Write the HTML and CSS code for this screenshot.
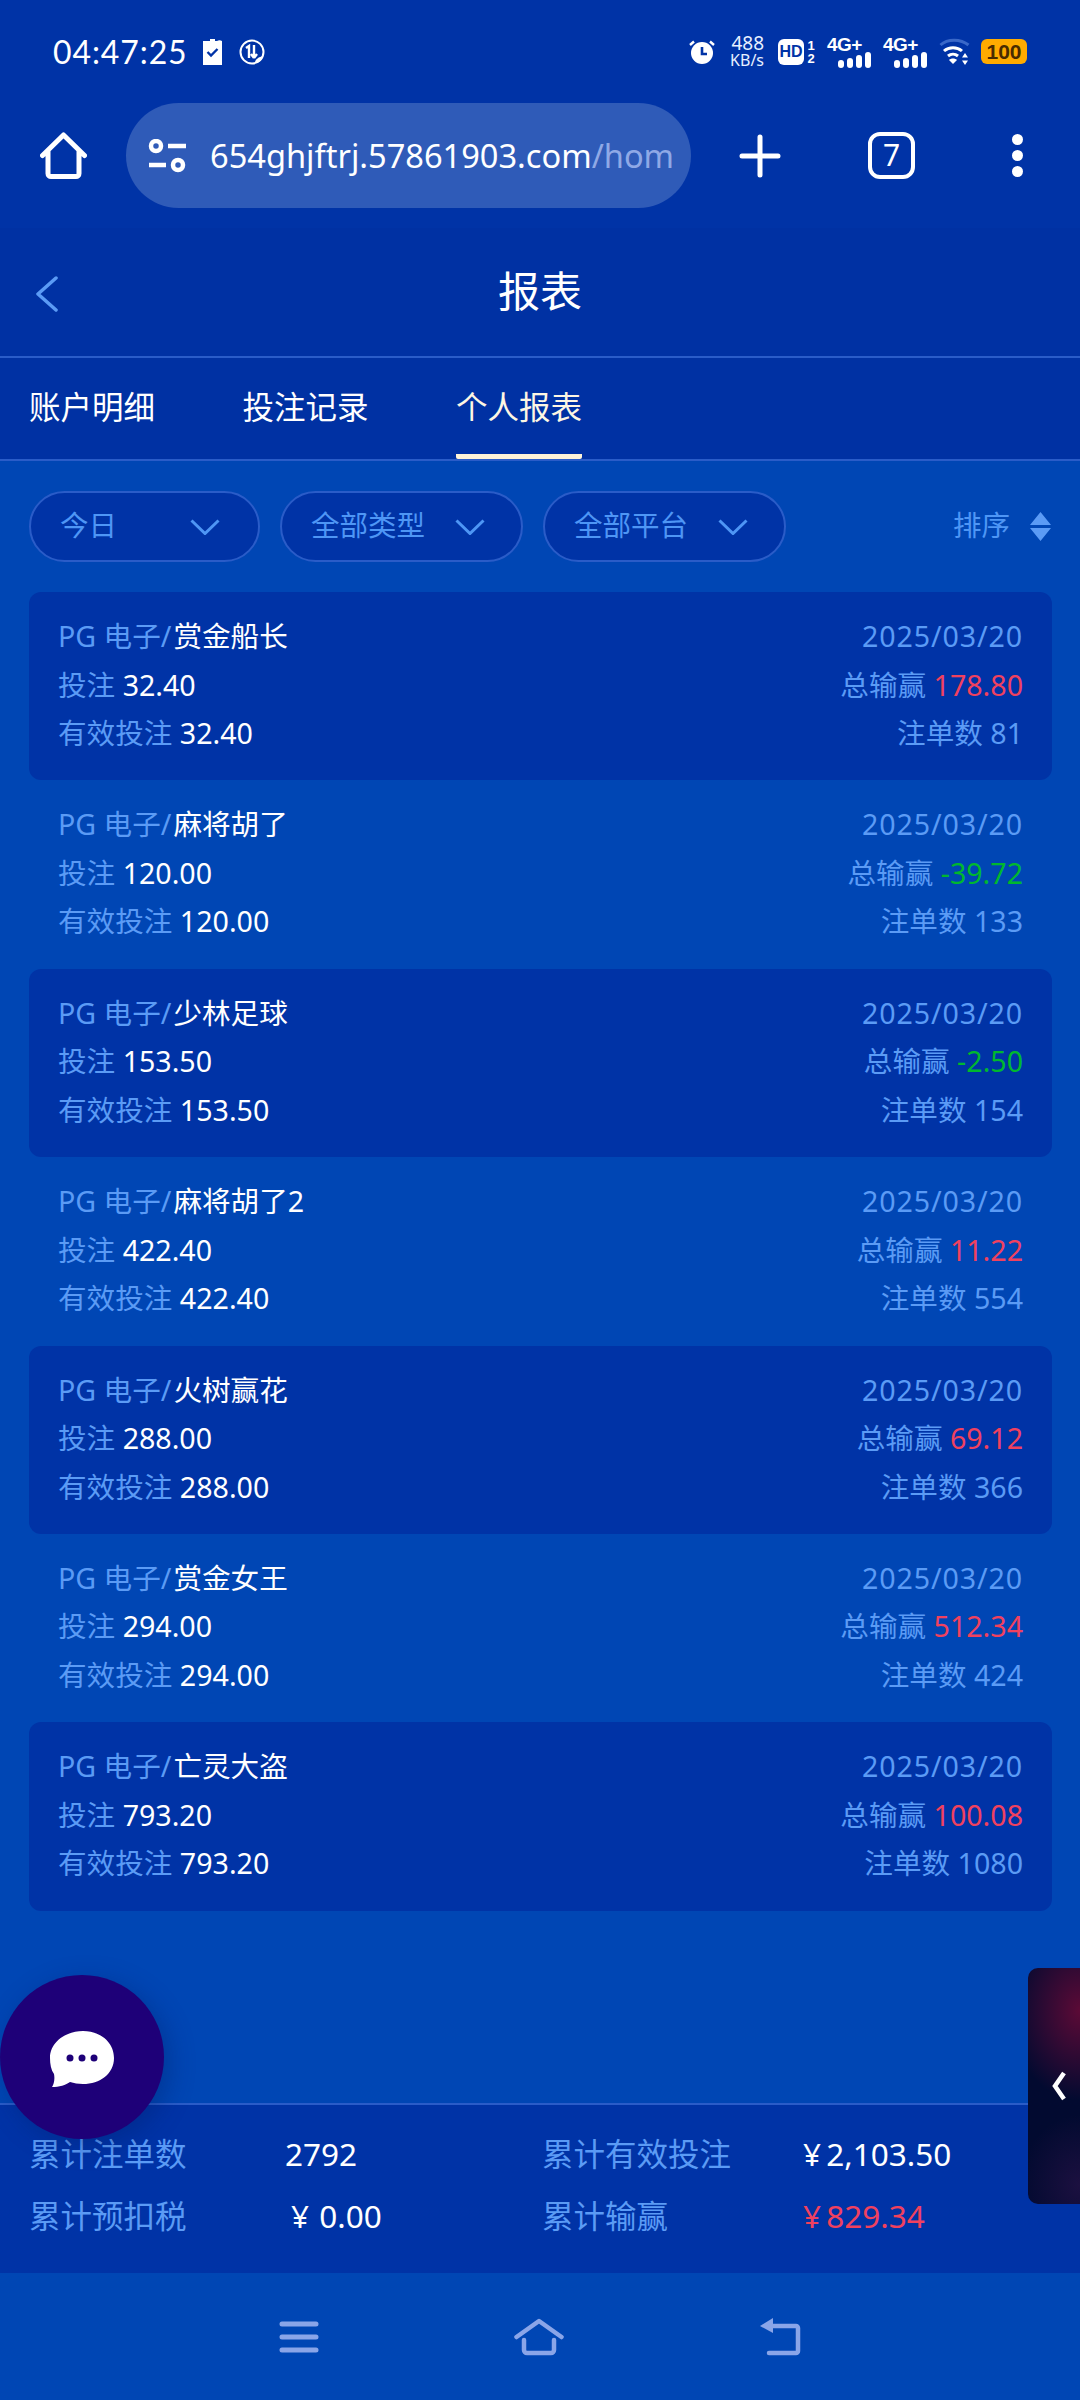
FILE: index.html
```html
<!DOCTYPE html>
<html lang="zh">
<head>
<meta charset="utf-8">
<title>报表</title>
<link rel="stylesheet" href="styles.css">
</head>
<body>
<div class="page">
  <header class="top">
    <div class="status">
      <span class="time">04:47:25</span>
      <svg class="st-batt" viewBox="0 0 19 26"><path fill="#fff" d="M5 2h2V0h5v2h2a5 5 0 0 1 5 0v24H0V2z"/><path fill="none" stroke="#0033a6" stroke-width="2.4" d="M4.500 13l3.500 3.500 6.500-6.500"/></svg>
      <svg class="st-circ" viewBox="0 0 26 26"><circle cx="13" cy="13" r="11.500" fill="none" stroke="#fff" stroke-width="2"/><path fill="none" stroke="#fff" stroke-width="2.400" d="M7 9l3-2v12M15 6v12M15 19l-3-4M15 19l3-4"/><path fill="#fff" d="M16 24c0-4 4-6 8-7-1 4-3 7-8 7z"/></svg>
      <span class="st-spacer"></span>
      <svg class="st-alarm" viewBox="0 0 26 26"><circle cx="13" cy="14" r="11" fill="#fff"/><path fill="none" stroke="#fff" stroke-width="2.400" d="M1 6l4-3.500M25 6l-4-3.500"/><path fill="none" stroke="#0033a6" stroke-width="2.600" d="M13 8v7h5"/></svg>
      <span class="st-speed"><span class="st-num">488</span><span class="st-unit">KB/s</span></span>
      <span class="st-hd">HD</span>
      <span class="st-sim"><span>1</span><span>2</span></span>
      <span class="st-net"><span class="st-g">4G+</span><span class="bars"><i class="b1"></i><i class="b2"></i><i class="b3"></i><i class="b4"></i></span></span>
      <span class="st-net"><span class="st-g">4G+</span><span class="bars"><i class="b1"></i><i class="b2"></i><i class="b3"></i><i class="b4"></i></span></span>
      <svg class="st-wifi" viewBox="0 0 32 27"><path fill="none" stroke="#3a68c8" stroke-width="3" d="M1.500 7c7-6.500 20-6.500 28 0"/><path fill="none" stroke="#fff" stroke-width="3" d="M5 13c5-4.500 13-4.500 18 0M9 18c3-2.500 7-2.500 10 0"/><path fill="#fff" d="M14 26l-4-4c2-2 6-2 8 0zM26 15l3 4.500h-6zM26 27l-3-4.500h6z"/></svg>
      <span class="st-battery">100</span>
    </div>
    <div class="toolbar">
      <svg class="tb-home" viewBox="0 0 47 47"><path fill="none" stroke="#fff" stroke-width="5" stroke-linecap="round" stroke-linejoin="round" d="M2.500 23.500 23.500 3l21 20.500M8 19v22.500a3 3 0 0 0 3 3h25a3 3 0 0 0 3-3V19"/></svg>
      <div class="url">
        <svg class="url-ico" viewBox="0 0 39 34"><g fill="none" stroke="#fff" stroke-width="4.500"><circle cx="8" cy="7" r="5"/><circle cx="30" cy="26" r="5"/></g><path stroke="#fff" stroke-width="4.500" d="M20 7h18M1 26h17"/></svg>
        <span class="url-text">654ghjftrj.57861903.com<span class="url-path">/hom</span></span>
      </div>
      <svg class="tb-plus" viewBox="0 0 42 44"><path stroke="#fff" stroke-width="5" stroke-linecap="round" d="M3 22h36M21 3v38"/></svg>
      <span class="tb-tabs">7</span>
      <span class="tb-menu"><i></i><i></i><i></i></span>
    </div>
    <div class="title-bar">
      <svg class="back" viewBox="0 0 24 36"><path fill="none" stroke="#5b9bf5" stroke-width="3.500" stroke-linecap="round" stroke-linejoin="round" d="M21 2 3 18l18 16"/></svg>
      <h1 class="title">报表</h1>
    </div>
    <nav class="tabs">
      <a class="tab">账户明细</a>
      <a class="tab">投注记录</a>
      <a class="tab tab-on">个人报表</a>
    </nav>
  </header>

  <main class="main">
    <div class="filters">
      <div class="pill pill-a"><span class="pill-text">今日</span><svg class="chev" viewBox="0 0 30 16"><path fill="none" stroke="#4e96f5" stroke-width="3" d="M1.500 1.500 15 14.500 28.500 1.500"/></svg></div>
      <div class="pill pill-b"><span class="pill-text">全部类型</span><svg class="chev" viewBox="0 0 30 16"><path fill="none" stroke="#4e96f5" stroke-width="3" d="M1.500 1.500 15 14.500 28.500 1.500"/></svg></div>
      <div class="pill pill-b"><span class="pill-text">全部平台</span><svg class="chev" viewBox="0 0 30 16"><path fill="none" stroke="#4e96f5" stroke-width="3" d="M1.500 1.500 15 14.500 28.500 1.500"/></svg></div>
      <div class="sort"><span class="pill-text">排序</span><svg class="sort-ico" viewBox="0 0 21 29"><path fill="#5b9bf5" d="M10.500 0 21 13H0zM10.500 29 0 16h21z"/></svg></div>
    </div>

    <section class="list">
      <article class="card card-dark">
        <div class="col"><p><span class="lbl">PG 电子/</span><span class="val name">赏金船长</span></p><p><span class="lbl">投注 </span><span class="val">32.40</span></p><p><span class="lbl">有效投注 </span><span class="val">32.40</span></p></div>
        <div class="col col-r"><p class="lbl date">2025/03/20</p><p><span class="lbl">总输赢 </span><span class="win">178.80</span></p><p class="lbl">注单数 81</p></div>
      </article>
      <article class="card">
        <div class="col"><p><span class="lbl">PG 电子/</span><span class="val name">麻将胡了</span></p><p><span class="lbl">投注 </span><span class="val">120.00</span></p><p><span class="lbl">有效投注 </span><span class="val">120.00</span></p></div>
        <div class="col col-r"><p class="lbl date">2025/03/20</p><p><span class="lbl">总输赢 </span><span class="loss">-39.72</span></p><p class="lbl">注单数 133</p></div>
      </article>
      <article class="card card-dark">
        <div class="col"><p><span class="lbl">PG 电子/</span><span class="val name">少林足球</span></p><p><span class="lbl">投注 </span><span class="val">153.50</span></p><p><span class="lbl">有效投注 </span><span class="val">153.50</span></p></div>
        <div class="col col-r"><p class="lbl date">2025/03/20</p><p><span class="lbl">总输赢 </span><span class="loss">-2.50</span></p><p class="lbl">注单数 154</p></div>
      </article>
      <article class="card">
        <div class="col"><p><span class="lbl">PG 电子/</span><span class="val name">麻将胡了2</span></p><p><span class="lbl">投注 </span><span class="val">422.40</span></p><p><span class="lbl">有效投注 </span><span class="val">422.40</span></p></div>
        <div class="col col-r"><p class="lbl date">2025/03/20</p><p><span class="lbl">总输赢 </span><span class="win">11.22</span></p><p class="lbl">注单数 554</p></div>
      </article>
      <article class="card card-dark">
        <div class="col"><p><span class="lbl">PG 电子/</span><span class="val name">火树赢花</span></p><p><span class="lbl">投注 </span><span class="val">288.00</span></p><p><span class="lbl">有效投注 </span><span class="val">288.00</span></p></div>
        <div class="col col-r"><p class="lbl date">2025/03/20</p><p><span class="lbl">总输赢 </span><span class="win">69.12</span></p><p class="lbl">注单数 366</p></div>
      </article>
      <article class="card">
        <div class="col"><p><span class="lbl">PG 电子/</span><span class="val name">赏金女王</span></p><p><span class="lbl">投注 </span><span class="val">294.00</span></p><p><span class="lbl">有效投注 </span><span class="val">294.00</span></p></div>
        <div class="col col-r"><p class="lbl date">2025/03/20</p><p><span class="lbl">总输赢 </span><span class="win">512.34</span></p><p class="lbl">注单数 424</p></div>
      </article>
      <article class="card card-dark">
        <div class="col"><p><span class="lbl">PG 电子/</span><span class="val name">亡灵大盗</span></p><p><span class="lbl">投注 </span><span class="val">793.20</span></p><p><span class="lbl">有效投注 </span><span class="val">793.20</span></p></div>
        <div class="col col-r"><p class="lbl date">2025/03/20</p><p><span class="lbl">总输赢 </span><span class="win">100.08</span></p><p class="lbl">注单数 1080</p></div>
      </article>
    </section>
  </main>

  <footer class="summary">
    <span class="lbl">累计注单数</span><span class="val sum-a">2792</span>
    <span class="lbl">累计有效投注</span><span class="val">¥ 2,103.50</span>
    <span class="lbl">累计预扣税</span><span class="val sum-b">¥ 0.00</span>
    <span class="lbl">累计输赢</span><span class="win">¥ 829.34</span>
  </footer>

  <nav class="sysnav">
    <svg class="sys-menu" viewBox="0 0 40 32"><path stroke="#8aa5e8" stroke-width="5" stroke-linecap="round" d="M3 3h34M3 16h34M3 29h34"/></svg>
    <svg class="sys-home" viewBox="0 0 50 38"><path fill="none" stroke="#8aa5e8" stroke-width="4.500" stroke-linecap="round" stroke-linejoin="round" d="M2.500 19 25 3l22.500 16M10 22v10a3 3 0 0 0 3 3h24a3 3 0 0 0 3-3V22"/></svg>
    <svg class="sys-back" viewBox="0 0 42 38"><path fill="none" stroke="#8aa5e8" stroke-width="4.500" stroke-linecap="round" stroke-linejoin="round" d="M9 8h28a2 2 0 0 1 2 2v23a2 2 0 0 1-2 2H10"/><path fill="#8aa5e8" d="M14 0v15L1 8z"/></svg>
  </nav>

  <button class="chat" aria-label="chat">
    <svg viewBox="0 0 64 56"><path fill="#fff" d="M33 0c17 0 31 11 31 27S50 53 33 53c-5 0-9-1-13-2-4 3-11 5-18 5 2-3 3-8 2-13C1 39 0 33 0 27 0 11 16 0 33 0z"/><circle cx="20" cy="27" r="3.500" fill="#1e0078"/><circle cx="32" cy="27" r="3.500" fill="#1e0078"/><circle cx="44" cy="27" r="3.500" fill="#1e0078"/></svg>
  </button>
  <div class="side"><svg viewBox="0 0 14 30"><path fill="none" stroke="#fff" stroke-width="4.500" d="M12 2 3 15l9 13"/></svg></div>
</div>
</body>
</html>
```
FILE: styles.css
```css
* { box-sizing: border-box; }
html, body { margin: 0; padding: 0; }
body {
  width: 1080px;
  height: 2400px;
  overflow: hidden;
  font-family: "Noto Sans", "Noto Sans CJK SC", sans-serif;
  color: #fff;
  background: #0046b4;
}
p, h1 { margin: 0; font-weight: 400; }
.page { position: relative; display: flex; flex-direction: column; height: 2400px; }

/* top */
.top { background: #0033a6; }
.status { display: flex; align-items: center; height: 103px; padding: 0 53px 0 53px; }
.time { font-size: 32px; line-height: 1; width: 150px; font-family: "Lato", "Noto Sans", sans-serif; letter-spacing: .9px; }
.st-batt { width: 19px; height: 26px; }
.st-circ { width: 26px; height: 26px; margin-left: 17px; }
.st-spacer { flex: 1; }
.st-alarm { width: 26px; height: 26px; }
.st-speed { display: flex; flex-direction: column; align-items: flex-end; width: 36px; margin-left: 13px; color: #e8f0ff; }
.st-num { font-size: 19px; line-height: 17px; }
.st-unit { font-size: 16px; line-height: 16px; }
.st-hd { width: 26px; height: 26px; margin-left: 14px; border-radius: 6px; background: #fff; color: #0033a6; font: 700 16px/26px "Liberation Sans", sans-serif; text-align: center; }
.st-sim { display: flex; flex-direction: column; width: 10px; margin-left: 2px; font: 700 13px/13px "Liberation Sans", sans-serif; text-align: center; }
.st-net { display: flex; flex-direction: column; align-items: flex-end; width: 44px; height: 32px; margin-left: 11px; }
.st-net + .st-net { margin-left: 12px; }
.st-g { align-self: flex-start; font: 700 19px/18px "Liberation Sans", sans-serif; letter-spacing: -.6px; }
.bars { display: flex; align-items: flex-end; gap: 3px; height: 16px; margin-top: -2px; }
.bars i { display: block; width: 6px; border-radius: 3px; background: #fff; }
.b1 { height: 8px; }
.b2 { height: 10px; }
.b3 { height: 13px; }
.b4 { height: 16px; }
.st-wifi { width: 32px; height: 27px; margin-left: 12px; }
.st-battery { width: 46px; height: 25px; margin-left: 10px; border-radius: 6px; background: #ffab00; color: #4a2b00; font: 700 21px/25px "Liberation Sans", sans-serif; text-align: center; }

.toolbar { display: flex; align-items: center; height: 125px; padding: 0 0 20px 40px; }
.tb-home { width: 47px; height: 47px; }
.url { display: flex; align-items: center; width: 565px; height: 105px; margin-left: 39px; padding: 0 20px 0 22px; border-radius: 53px; background: #2f5bb8; }
.url-ico { flex: none; width: 39px; height: 34px; }
.url-text { flex: 1; margin-left: 23px; white-space: nowrap; font-size: 32.600px; line-height: 46px; }
.url-path { color: #8fa9e6; }
.tb-plus { width: 42px; height: 44px; margin-left: 48px; }
.tb-tabs { width: 47px; height: 47px; margin-left: 87px; border: 4px solid #fff; border-radius: 12px; font-size: 30px; line-height: 38px; text-align: center; }
.tb-menu { display: flex; flex-direction: column; gap: 5px; margin-left: 97px; }
.tb-menu i { display: block; width: 11px; height: 11px; border-radius: 50%; background: #fff; }

.title-bar { position: relative; display: flex; align-items: center; justify-content: center; height: 130px; border-bottom: 2px solid #2a5cc8; background: #0031a3; }
.back { position: absolute; left: 35px; top: 48px; width: 24px; height: 36px; }
.title { font-size: 42px; line-height: 56px; margin-top: -2px; }

.tabs { display: flex; gap: 87.500px; height: 103px; padding-left: 29px; border-bottom: 2px solid #2a5cc8; background: #0031a3; }
.tab { display: block; height: 101px; padding-top: 27px; font-size: 31.500px; line-height: 44px; }
.tab-on { color: #fdf6e3; border-bottom: 5px solid #fdf3d8; border-radius: 0 0 2px 2px; }

/* main */
.main { flex: 1; display: flex; flex-direction: column; padding: 0 28px 0 29px; }
.filters { display: flex; align-items: center; gap: 20px; height: 131px; flex: none; padding-right: 1px; }
.pill { display: flex; align-items: center; justify-content: space-between; height: 71px; border: 2px solid #2a5cc8; border-radius: 36px; background: #0033a6; color: #4e96f5; font-size: 28.500px; line-height: 40px; }
.pill-a { width: 231px; padding: 0 38px 0 29px; }
.pill-b { width: 243px; padding: 0 36px 0 29px; }
.pill-text { margin-top: -3px; }
.chev { width: 30px; height: 16px; }
.sort { display: flex; align-items: center; gap: 20px; margin-left: auto; color: #4e96f5; font-size: 28.500px; line-height: 40px; }
.sort-ico { width: 21px; height: 29px; }

.list { display: flex; flex-direction: column; }
.card { display: flex; justify-content: space-between; height: 188.400px; padding: 20px 29px 0; border-radius: 12px; font-size: 28.600px; line-height: 48.500px; white-space: pre-wrap; }
.card-dark { background: #0033a6; }
.col-r { text-align: right; }
.date { letter-spacing: .9px; }
.name { margin-left: 2px; }
.lbl { color: #5b9bf5; }
.val { color: #fff; }
.win { color: #f0415f; }
.loss { color: #00b82e; }

/* summary */
.summary { display: grid; grid-template-columns: 256px 257px 261px 1fr; grid-auto-rows: 62px; align-items: center; height: 170px; padding: 18px 0 0 29px; background: #0033a6; border-top: 2px solid #2a5cc8; font-size: 31.500px; line-height: 44px; word-spacing: -3px; }
.sum-b { padding-left: 6px; word-spacing: 2px; }

.sysnav { display: flex; align-items: center; justify-content: center; gap: 195px; height: 127px; padding: 0 1px 0 0; }
.sys-menu { width: 40px; height: 32px; }
.sys-home { width: 50px; height: 38px; }
.sys-back { width: 42px; height: 38px; }

/* overlays */
.chat { position: absolute; left: 0; top: 1975px; display: flex; align-items: center; justify-content: center; width: 164px; height: 164px; padding: 4px 0 0; border: 0; border-radius: 50%; background: #1e0078; box-shadow: 6px 6px 24px rgba(0, 30, 100, .35); }
.chat svg { width: 64px; height: 56px; }
.side { position: absolute; right: 0; top: 1968px; display: flex; align-items: center; justify-content: flex-end; width: 52px; height: 236px; padding: 0 14px 0 0; border-radius: 10px 0 0 10px; background: radial-gradient(70px 90px at 100% 18%, #5c0a36, rgba(92, 10, 54, 0) 100%), radial-gradient(60px 70px at 100% 92%, #1c1040, rgba(28, 16, 64, 0) 100%), #020a30; }
.side svg { width: 14px; height: 30px; }
```
